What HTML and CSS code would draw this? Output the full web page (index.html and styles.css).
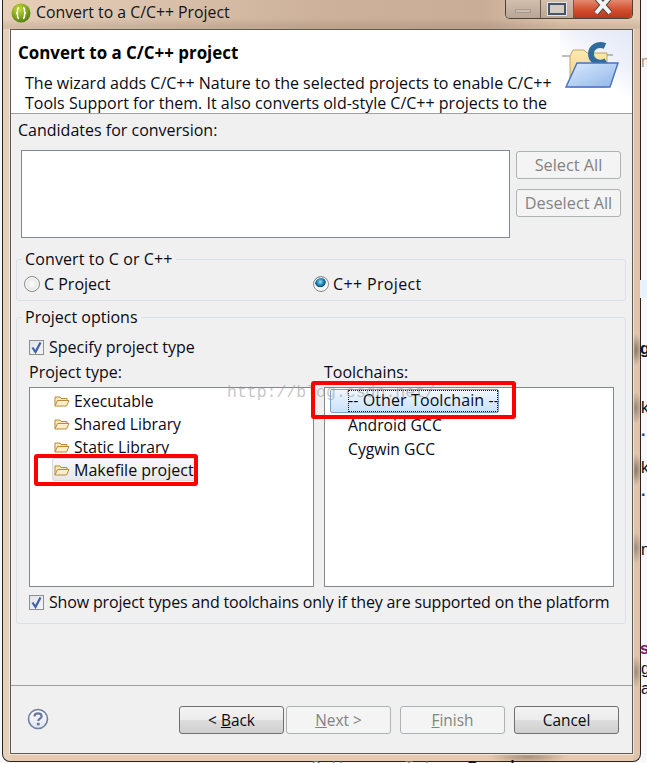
FILE: index.html
```html
<!DOCTYPE html>
<html lang="en">
<head>
<meta charset="utf-8">
<title>Convert to a C/C++ Project</title>
<link rel="stylesheet" href="styles.css">
</head>
<body>
<div class="desktop">
  <div class="snips">
    <span class="snip-patch"></span>
    <span class="snip snip-m">m</span>
    <span class="snip snip-g">g</span>
    <span class="snip snip-k1">k</span>
    <span class="snip snip-d1">.</span>
    <span class="snip snip-k2">k</span>
    <span class="snip snip-d2">.</span>
    <span class="snip snip-n">n</span>
    <span class="snip snip-s">s</span>
    <span class="snip snip-g2">g</span>
    <span class="snip snip-a">a</span>
    <span class="snip snip-b1">Problems</span>
    <span class="snip snip-b2">Tasks</span>
    <span class="snip snip-b3">Console</span>
  </div>
  <div class="window">
    <div class="titlebar">
      <svg class="app-icon" width="20" height="20" viewBox="0 0 20 20">
        <defs><radialGradient id="ag" cx="40%" cy="30%" r="75%"><stop offset="0" stop-color="#c6dc3a"/><stop offset="1" stop-color="#4c7a10"/></radialGradient></defs>
        <circle cx="10" cy="10" r="9.5" fill="url(#ag)"/>
        <path d="M8 4.5c-2 0-1.3 3.5-1.6 4.4-.2.7-.9 1.1-1.4 1.1.5 0 1.2.4 1.4 1.1.3.9-.4 4.4 1.6 4.4M12 4.5c2 0 1.3 3.5 1.6 4.4.2.7.9 1.1 1.4 1.1-.5 0-1.2.4-1.4 1.1-.3.9.4 4.4-1.6 4.4" fill="none" stroke="#fff" stroke-width="1.5"/>
      </svg>
      <span class="title-text">Convert to a C/C++ Project</span>
      <div class="controls">
        <div class="ctl ctl-min"><span class="min-bar"></span></div>
        <div class="ctl ctl-max"><span class="max-box"></span></div>
        <div class="ctl ctl-close">
          <svg width="24" height="19" viewBox="0 0 24 19"><path d="M5-3 19 13M19-3 5 13" stroke="#4a4a4a" stroke-width="6"/><path d="M5-3 19 13M19-3 5 13" stroke="#f4f4f4" stroke-width="4"/></svg>
        </div>
      </div>
    </div>
    <div class="client">
      <header class="banner">
        <div class="banner-text">
          <h1 class="banner-title">Convert to a C/C++ project</h1>
          <p class="banner-desc">The wizard adds C/C++ Nature to the selected projects to enable C/C++<br>Tools Support for them. It also converts old-style C/C++ projects to the</p>
        </div>
        <div class="banner-art">
          <svg width="72" height="66" viewBox="0 0 72 66">
            <defs>
              <linearGradient id="fy" x1="0" y1="0" x2="0" y2="1"><stop offset="0" stop-color="#fbeab0"/><stop offset="1" stop-color="#eacb80"/></linearGradient>
              <linearGradient id="fb" x1="0" y1="0" x2="1" y2="1"><stop offset="0" stop-color="#dcebfc"/><stop offset="1" stop-color="#8fb6ea"/></linearGradient>
            </defs>
            <path d="M2 26h8M46 25h7" stroke="#a9a9a9" stroke-width="1.6" fill="none"/>
            <path d="M10 57V26l3-6h11l3 3h20v34z" fill="url(#fy)" stroke="#c3a35c"/>
            <path d="M46 31C39 35 31 31 31 24s7-11 14-8" fill="none" stroke="#2f6c9e" stroke-width="6"/>
            <path d="M17 33h41l-8 24H6z" fill="url(#fb)" stroke="#4a70c0" stroke-width="1.4"/>
          </svg>
        </div>
      </header>
      <main class="content">
        <div class="cand-label">Candidates for conversion:</div>
        <div class="cand-row">
          <div class="cand-list"></div>
          <div class="cand-btns">
            <button class="btn btn-off">Select All</button>
            <button class="btn btn-off">Deselect All</button>
          </div>
        </div>
        <fieldset class="group group-lang">
          <legend class="legend">Convert to C or C++</legend>
          <div class="radios">
            <label class="radio-item radio-c"><span class="radio"></span>C Project</label>
            <label class="radio-item radio-cpp"><span class="radio radio-on"></span>C++ Project</label>
          </div>
        </fieldset>
        <fieldset class="group group-opts">
          <legend class="legend">Project options</legend>
          <div class="opts-body">
            <label class="check-row check-top"><span class="check">
              <svg width="13" height="13" viewBox="0 0 13 13"><path d="M2.5 6.5 5.5 11 10.5 1.5" fill="none" stroke="#3f5fa8" stroke-width="2.2"/></svg>
            </span>Specify project type</label>
            <div class="columns">
              <div class="col col-type">
                <div class="col-label">Project type:</div>
                <ul class="list">
                  <li class="row"><svg class="folder" width="16" height="14" viewBox="0 0 16 14"><path d="M1 12V3h5l1 1.500h6v2" fill="#fbe7b8" stroke="#b98a3c"/><path d="M1 12l2.500-5.500H15L12.500 12z" fill="#fdeec9" stroke="#b98a3c"/></svg>Executable</li>
                  <li class="row"><svg class="folder" width="16" height="14" viewBox="0 0 16 14"><path d="M1 12V3h5l1 1.500h6v2" fill="#fbe7b8" stroke="#b98a3c"/><path d="M1 12l2.500-5.500H15L12.500 12z" fill="#fdeec9" stroke="#b98a3c"/></svg>Shared Library</li>
                  <li class="row"><svg class="folder" width="16" height="14" viewBox="0 0 16 14"><path d="M1 12V3h5l1 1.500h6v2" fill="#fbe7b8" stroke="#b98a3c"/><path d="M1 12l2.500-5.500H15L12.500 12z" fill="#fdeec9" stroke="#b98a3c"/></svg>Static Library</li>
                  <li class="row row-sel"><svg class="folder" width="16" height="14" viewBox="0 0 16 14"><path d="M1 12V3h5l1 1.500h6v2" fill="#fbe7b8" stroke="#b98a3c"/><path d="M1 12l2.500-5.500H15L12.500 12z" fill="#fdeec9" stroke="#b98a3c"/></svg>Makefile project</li>
                </ul>
              </div>
              <div class="col col-tool">
                <div class="col-label">Toolchains:</div>
                <ul class="list list-tool">
                  <li class="tool tool-sel"><span class="tool-focus">-- Other Toolchain --</span></li>
                  <li class="tool">Android GCC</li>
                  <li class="tool">Cygwin GCC</li>
                </ul>
              </div>
            </div>
            <label class="check-row check-bottom"><span class="check">
              <svg width="13" height="13" viewBox="0 0 13 13"><path d="M2.5 6.5 5.500 11 10.500 1.500" fill="none" stroke="#3f5fa8" stroke-width="2.2"/></svg>
            </span>Show project types and toolchains only if they are supported on the platform</label>
          </div>
        </fieldset>
      </main>
      <footer class="footer">
        <svg class="help" width="22" height="22" viewBox="0 0 22 22">
          <defs><linearGradient id="hg" x1="0" y1="0" x2="0" y2="1"><stop offset="0" stop-color="#ffffff"/><stop offset="1" stop-color="#dfe4f0"/></linearGradient></defs>
          <circle cx="11" cy="11" r="9.500" fill="url(#hg)" stroke="#6f7f9f" stroke-width="1.600"/>
          <path d="M7.500 8.500C7.500 6 9.500 5.300 11 5.300c2 0 3.600 1.100 3.600 3 0 2.400-3.300 2.400-3.300 4.700" fill="none" stroke="#66779c" stroke-width="2.200"/>
          <circle cx="11.300" cy="16" r="1.500" fill="#66779c"/>
        </svg>
        <div class="nav">
          <button class="btn btn-nav btn-back">&lt; <u>B</u>ack</button>
          <button class="btn btn-nav btn-off btn-next"><u>N</u>ext &gt;</button>
          <button class="btn btn-nav btn-off btn-finish"><u>F</u>inish</button>
          <button class="btn btn-nav btn-cancel">Cancel</button>
        </div>
      </footer>
    </div>
  </div>
  <div class="watermark">http://blog.csdn.net/</div>
  <div class="redbox redbox-a"></div>
  <div class="redbox redbox-b"></div>
</div>
</body>
</html>
```
FILE: styles.css
```css
* { box-sizing: border-box; }
html, body { margin: 0; padding: 0; }
body { font-family: "Open Sans", "Noto Sans", sans-serif; font-size: 16px; color: #0a0a14; }
.desktop { position: relative; width: 647px; height: 763px; overflow: hidden; background: #f8f8fb; }

.snips { position: absolute; inset: 0; }
.snip-patch { position: absolute; left: 640px; top: 280px; width: 7px; height: 18px; background: #e9f1fb; }
.snip { position: absolute; font-family: "Liberation Sans", sans-serif; font-size: 16px; line-height: 18px; color: #0a1020; }
.snip-m { left: 641px; top: 53px; color: #a09a94; }
.snip-g { left: 640px; top: 340px; font-weight: 700; }
.snip-k1 { left: 641px; top: 399px; }
.snip-d1 { left: 641px; top: 422px; font-weight: 700; color: #1a3c8a; }
.snip-k2 { left: 641px; top: 459px; }
.snip-d2 { left: 641px; top: 482px; font-weight: 700; color: #1a3c8a; }
.snip-n { left: 641px; top: 541px; }
.snip-s { left: 640px; top: 640px; font-weight: 700; color: #7b1a6a; }
.snip-g2 { left: 641px; top: 660px; }
.snip-a { left: 641px; top: 680px; }
.snip-b1 { left: 312px; top: 757px; font-size: 13px; color: #666; }
.snip-b2 { left: 405px; top: 757px; font-size: 13px; color: #666; }
.snip-b3 { left: 467px; top: 757px; font-size: 14px; font-weight: 700; }

.window {
  margin-left: 2px; width: 639px; height: 762px;
  padding: 0 7px 7px;
  border: 1px solid #2a2420; border-top: 0;
  border-radius: 0 0 8px 8px;
  background:
    radial-gradient(ellipse 6px 16px at 633px 350px, #8d7a68, transparent),
    radial-gradient(ellipse 6px 16px at 633px 408px, #9a8674, transparent),
    radial-gradient(ellipse 6px 16px at 633px 470px, #8d7a68, transparent),
    radial-gradient(ellipse 6px 16px at 633px 548px, #a08c7a, transparent),
    radial-gradient(ellipse 6px 16px at 633px 672px, #a08c7a, transparent),
    radial-gradient(ellipse 40px 6px at 525px 757px, #a8907c, transparent),
    linear-gradient(90deg, #e6cfbb 0, #e6cfbb 8px, transparent 8px, transparent 630px, #e0c4aa 630px),
    linear-gradient(180deg, #e7cfba 0, #efe3d8 110px, #efe3d8 200px, #e6c9ae 240px, #e6c9ae 100%);
  display: flex; flex-direction: column;
}
.titlebar {
  height: 29px; flex: none; margin: 0 -7px; padding-left: 8px;
  display: flex; align-items: flex-start; position: relative;
  background:
    linear-gradient(180deg, transparent 0, transparent 18px, rgba(120, 100, 80, .18) 26px),
    linear-gradient(90deg, #e8cfb8 0, #dcc4ae 120px, #cdb19a 320px, #c9ad97 480px, #e2c8b0 560px, #e6ccb4 100%);
}
.app-icon { margin-top: 3px; }
.title-text { margin-left: 5px; margin-top: 2px; font-size: 15.8px; line-height: 21px; color: #141414; }
.controls {
  margin-left: auto; margin-right: 7px; height: 19px; width: 128px;
  display: flex; border: 1px solid #4d4238; border-top: 0; border-radius: 0 0 5px 5px; overflow: hidden;
}
.ctl { display: flex; justify-content: center; border-right: 1px solid #6a5e54; }
.ctl-min { width: 35px; background: linear-gradient(180deg, #d3bfae, #b9a595); }
.ctl-max { width: 33px; background: linear-gradient(180deg, #d3bfae, #b9a595); }
.ctl-close { flex: 1; border-right: 0; background: linear-gradient(180deg, #e48a70 0, #d24e2e 55%, #b9381e 100%); }
.min-bar { width: 16px; height: 4px; margin-top: 9px; background: #c9bdb1; border: 1px solid #a79a8d; }
.max-box { width: 18px; height: 12px; margin-top: 3px; border: 2px solid #45556e; background: #d5cbc1; outline: 1px solid #e8e2dc; }

.client {
  flex: 1; display: flex; flex-direction: column; min-height: 0;
  background: #f0f0f0; border: 1px solid #5e5a56;
  box-shadow: 0 0 0 1px rgba(255, 255, 255, .55);
}
.banner { height: 84px; flex: none; display: flex; background: #fff; border-bottom: 1px solid #a0a0a0; overflow: hidden; }
.banner-text { flex: 1; min-width: 0; padding-left: 7px; }
.banner-title { margin: 12px 0 0; font-size: 16.9px; line-height: 22px; font-weight: 700; color: #000; }
.banner-desc { margin: 9px 0 0 7px; font-size: 16px; line-height: 20px; white-space: nowrap; }
.banner-art { width: 72px; height: 66px; flex: none; background: linear-gradient(215deg, #e4e9f7 0, #eef1fa 35%, #fff 62%); }
.banner-art svg { display: block; }

.content { flex: none; height: 571px; padding: 0 6px 0 5px; }
.cand-label { margin: 6px 0 0 2px; line-height: 20px; font-size: 16px; }
.cand-row { display: flex; margin: 10px 0 0 5px; height: 99px; }
.cand-list { width: 489px; height: 88px; background: #fff; border: 1px solid #828790; }
.cand-btns { margin: 1px 0 0 6px; display: flex; flex-direction: column; gap: 10px; }
.btn {
  width: 105px; height: 28px; padding: 0; font: inherit; font-size: 15.4px; color: #0a0a14;
  border: 1px solid #707070; border-radius: 3px;
  background: linear-gradient(180deg, #f3f3f3 0, #ececec 48%, #dedede 50%, #cfcfcf 100%);
}
.btn-off { color: #838383; border-color: #adb2b5; background: #f4f4f4; }
.cand-btns .btn { font-size: 16.3px; }

.group { margin: 0; padding: 0; border: 1px solid #d8e1e9; border-radius: 3px; min-width: 0; }
.legend { margin-left: 5px; padding: 0 3px; line-height: 20px; }
.group-lang { height: 52px; }
.group-lang .legend { letter-spacing: .12px; }
.radios { display: flex; padding: 5px 0 0 7px; line-height: 20px; }
.radio-item { display: flex; align-items: center; gap: 4px; }
.radio-c { width: 289px; }
.radio-cpp { letter-spacing: .35px; }
.radio {
  width: 16px; height: 16px; border-radius: 50%; border: 1px solid #8a8a8a;
  background: radial-gradient(circle at 50% 50%, #fdfdfd 0, #d8d8d8 100%);
  box-shadow: inset 0 0 0 1px #fff;
}
.radio-on { background: radial-gradient(circle at 45% 35%, #9fe0f6 0, #1c86b8 28%, #0c4f78 42%, #f4f4f4 48%, #f4f4f4 100%); }

.group-opts { height: 317px; margin-top: 6px; }
.opts-body { padding-left: 12px; }
.check-row { display: flex; align-items: center; gap: 5px; line-height: 20px; }
.check-top { margin-top: 10px; }
.check {
  width: 15px; height: 15px; flex: none; display: flex; align-items: center; justify-content: center;
  border: 1px solid #8e8f8f; background: linear-gradient(135deg, #dfe3ea, #f6f6f6);
}
.columns { display: flex; gap: 10px; margin-top: 5px; }
.col-type { width: 285px; }
.col-tool { width: 290px; }
.col-label { line-height: 20px; }
.list { list-style: none; margin: 5px 0 0; padding: 1px 0 0; height: 200px; background: #fff; border: 1px solid #828790; }
.row { height: 23px; margin-left: 22px; padding-left: 2px; display: flex; align-items: center; gap: 4px; width: 143px; font-size: 15.7px; white-space: nowrap; }
.row-sel { background: linear-gradient(180deg, #f8f8f8, #e8e8e8); border: 1px solid #dcdcdc; border-radius: 2px; padding-left: 1px; font-size: 16px; }
.folder { flex: none; }
.tool { height: 24px; margin-left: 23px; display: flex; align-items: center; line-height: 20px; font-size: 15.7px; white-space: nowrap; }
.tool-sel {
  margin-left: 5px; width: 169px; height: 24px; padding-left: 17px; font-size: 16px; letter-spacing: .1px;
  background: linear-gradient(180deg, #f0f7ff, #c9e1fb); border: 1px solid #7da2ce; border-radius: 2px;
}
.tool-focus { display: block; width: 100%; height: 100%; line-height: 20px; outline: 1px dotted #111; outline-offset: -1px; }
.check-bottom { margin-top: 5px; letter-spacing: -.16px; white-space: nowrap; }

.footer { flex: 1; min-height: 0; border-top: 1px solid #a0a0a0; display: flex; align-items: flex-start; padding: 20px 0 0 16px; }
.help { margin-top: 2px; }
.nav { margin-left: 130px; display: flex; }
.btn-nav { width: 105px; height: 28px; }
.btn-next { margin-left: 2px; }
.btn-finish { margin-left: 9px; }
.btn-cancel { margin-left: 9px; }

.watermark {
  position: absolute; left: 227px; top: 383px;
  font-family: "Liberation Mono", monospace; font-size: 16.5px; line-height: 20px;
  color: rgba(150, 150, 150, .55);
}
.redbox { position: absolute; border: 4px solid #f00; border-radius: 3px; }
.redbox-a { left: 34px; top: 454px; width: 164px; height: 32px; }
.redbox-b { left: 311px; top: 381px; width: 205px; height: 38px; }
```
